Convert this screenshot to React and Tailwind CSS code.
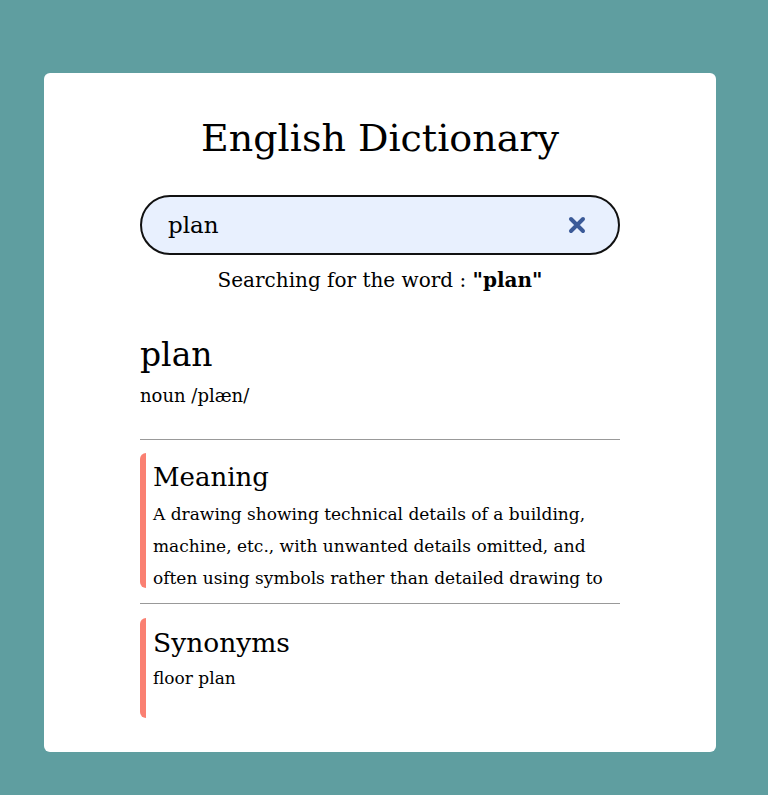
import { useState } from "react";

const serif = "font-['DejaVu_Serif','Liberation_Serif',serif]";

const App = () => {
  const [word, setWord] = useState("plan");

  return (
    <div className="min-h-screen bg-[#5f9ea0] pt-[73px] pl-[44px] pb-[43px]">
      <div className={`w-[672px] bg-white rounded-md px-[96px] pt-[36px] pb-[34px] text-black ${serif}`}>
        <h1 className="text-[38px] leading-[58px] text-center">English Dictionary</h1>

        <div className="mt-[28px] h-[60px] rounded-full border-2 border-[#111] bg-[#e8f0fe] flex items-center pl-[26px] pr-[32px]">
          <input
            value={word}
            onChange={(e) => setWord(e.target.value)}
            className="flex-1 bg-transparent outline-none text-[23px] text-black"
          />
          <svg width="18" height="18" viewBox="0 0 18 18">
            <path d="M3 3 L15 15 M15 3 L3 15" stroke="#3b5a98" strokeWidth="4" strokeLinecap="round" />
          </svg>
        </div>

        <p className="text-center text-[20px] leading-[30px] mt-[10px]">
          Searching for the word : <b className="font-bold">"{word}"</b>
        </p>

        <div className="mt-[38px]">
          <h2 className="text-[33px] leading-[44px]">{word}</h2>
          <p className="text-[18px] leading-[26px] mt-[6px]">noun /plæn/</p>
        </div>

        <hr className="mt-[30px] border-[#999]" />

        <div className="mt-[13px] h-[135px] border-l-[6px] border-[#fa8072] rounded-l-md pl-[7px] pt-[4px]">
          <h3 className="text-[26px] leading-[41px]">Meaning</h3>
          <p className="text-[17px] leading-[32px] -mb-[6px]">
            A drawing showing technical details of a building, machine, etc., with unwanted
            details omitted, and often using symbols rather than detailed drawing to
          </p>
        </div>

        <hr className="mt-[15px] border-[#999]" />

        <div className="mt-[14px] h-[100px] border-l-[6px] border-[#fa8072] rounded-l-md pl-[7px] pt-[4px]">
          <h3 className="text-[26.5px] leading-[41px]">Synonyms</h3>
          <p className="text-[17px] leading-[30px]">floor plan</p>
        </div>
      </div>
    </div>
  );
};

export default App;
